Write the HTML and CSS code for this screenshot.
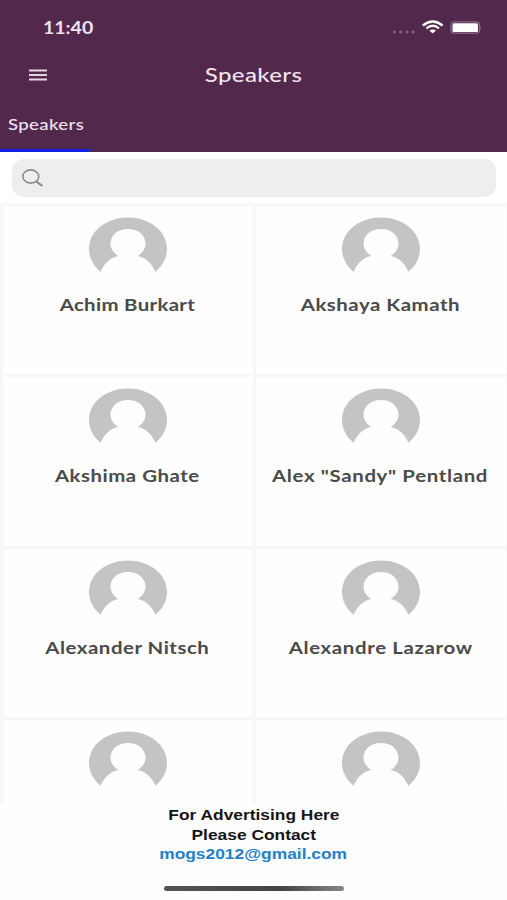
FILE: index.html
```html
<!DOCTYPE html>
<html lang="en">
<head>
<meta charset="utf-8">
<title>Speakers</title>
<link rel="stylesheet" href="styles.css">
</head>
<body>
<svg width="0" height="0" class="defs">
  <symbol id="avatar" viewBox="0 0 78 56">
    <path fill="#c4c4c4" d="M11.700 54.700C4.500 49 0 41 0 32C0 14 17.500 0.500 39 0.500S78 14 78 32C78 41 73.500 49 66.300 54.700C63.500 47.500 57.500 40.500 48.500 39C53.500 36.300 56.500 31.500 56.500 26.500C56.500 18 48.700 12 39 12S21.500 18 21.500 26.500C21.500 31.500 24.500 36.300 29.500 39C20.500 40.500 14.500 47.500 11.700 54.700Z"/>
  </symbol>
</svg>
<header class="header">
  <div class="status">
    <span class="time wide">11:40</span>
    <svg class="indicators" width="92" height="18" viewBox="0 0 92 18">
      <g fill="#7d5b7a"><circle cx="4.500" cy="14" r="1.700"/><circle cx="10.700" cy="14" r="1.700"/><circle cx="16.900" cy="14" r="1.700"/><circle cx="23" cy="14" r="1.700"/></g>
      <g fill="none" stroke="#fff" stroke-width="2.300"><path d="M32.800 7.500Q42.700-.5 52.600 7.500"/><path d="M36.400 10.300Q42.700 5.300 49 10.300"/></g>
      <path fill="#fff" d="M39.400 12.600Q42.700 10.300 46 12.600L42.700 15.600Z"/>
      <rect x="61" y="3.900" width="28.500" height="11.200" rx="3" fill="none" stroke="#8b6d89" stroke-width="1.200"/>
      <rect x="62.500" y="5.300" width="25.500" height="8.700" rx="1.500" fill="#fff"/>
      <path fill="#9a8098" d="M90.300 7.700Q92 9.600 90.300 11.400Z"/>
    </svg>
  </div>
  <div class="bar">
    <svg class="menu" width="18" height="12" viewBox="0 0 18 12"><path stroke="#e3d7e2" stroke-width="1.900" d="M0 1.500H18M0 6H18M0 10.500H18"/></svg>
    <h1 class="title wide">Speakers</h1>
  </div>
  <nav class="tabs"><a class="tab"><span class="wide">Speakers</span></a></nav>
</header>
<div class="search-wrap">
  <div class="search">
    <svg width="22" height="18" viewBox="0 0 22 18" fill="none" stroke="#8c8c8c"><ellipse cx="8.800" cy="7.500" rx="8" ry="6.600" stroke-width="1.600"/><path stroke-width="2.200" d="M14 12.100L20.300 17"/></svg>
  </div>
</div>
<main class="grid">
  <div class="card"><svg class="avatar"><use href="#avatar"/></svg><span class="name wide snug">Achim Burkart</span></div>
  <div class="card"><svg class="avatar"><use href="#avatar"/></svg><span class="name wide">Akshaya Kamath</span></div>
  <div class="card"><svg class="avatar"><use href="#avatar"/></svg><span class="name wide">Akshima Ghate</span></div>
  <div class="card"><svg class="avatar"><use href="#avatar"/></svg><span class="name wide loose">Alex "Sandy" Pentland</span></div>
  <div class="card"><svg class="avatar"><use href="#avatar"/></svg><span class="name wide">Alexander Nitsch</span></div>
  <div class="card"><svg class="avatar"><use href="#avatar"/></svg><span class="name wide loose">Alexandre Lazarow</span></div>
  <div class="card"><svg class="avatar"><use href="#avatar"/></svg></div>
  <div class="card"><svg class="avatar"><use href="#avatar"/></svg></div>
</main>
<footer class="footer">
  <p class="line">For Advertising Here</p>
  <p class="line">Please Contact</p>
  <p class="line mail">mogs2012@gmail.com</p>
  <div class="home"></div>
</footer>
</body>
</html>
```
FILE: styles.css
```css
* { box-sizing: border-box; margin: 0; }
body {
  width: 507px;
  height: 900px;
  overflow: hidden;
  display: flex;
  flex-direction: column;
  background: #fefefe;
  font-family: Lato, "Open Sans", sans-serif;
}
.defs { position: absolute; }
.wide { display: block; white-space: nowrap; transform: scaleX(1.2); }
.header {
  height: 151.500px;
  flex: none;
  display: flex;
  flex-direction: column;
  background: #52294d;
  color: #f0e2ef;
}
.status { height: 51px; display: flex; justify-content: space-between; padding: 18px 25px 0 43px; }
.time { font-size: 16.500px; line-height: 20px; font-weight: 700; transform: scaleX(1.18); transform-origin: left; }
.bar { height: 46px; display: grid; grid-template-columns: 100px 1fr 100px; align-items: center; }
.menu { margin: 1px 0 0 29px; }
.title { font-size: 20px; font-weight: 500; text-align: center; letter-spacing: .3px; }
.tabs { flex: 1; display: flex; }
.tab { width: 90px; padding: 17px 0 0 8px; border-bottom: 3px solid #1420e6; font-size: 15.500px; line-height: 20px; font-weight: 500; letter-spacing: .3px; }
.tab .wide { transform-origin: left; }
.search-wrap { flex: none; height: 51.500px; padding: 7.500px 11px 0 12px; background: #fff; }
.search { height: 38px; border-radius: 12px; background: #eee; padding: 10px 0 0 9.500px; }
.grid {
  flex: none;
  height: 602px;
  overflow: hidden;
  display: grid;
  grid-template-columns: 249.500px 250px;
  grid-auto-rows: 168.400px;
  gap: 3px;
  padding: 3px;
  background: #f7f7f7;
}
.card { display: flex; flex-direction: column; align-items: center; background: #fefefe; padding-top: 11px; }
.avatar { width: 78px; height: 56px; flex: none; }
.name { margin-top: 21px; font-size: 17px; line-height: 22px; font-weight: 700; color: #4a4a4a; letter-spacing: .43px; }
.snug { letter-spacing: .27px; }
.loose { letter-spacing: .54px; }
.footer { flex: 1; display: flex; flex-direction: column; align-items: center; font-family: "Liberation Sans", Arial, sans-serif; font-weight: 700; }
.line { font-size: 15px; line-height: 19.600px; color: #151515; transform: scaleX(1.158); }
.mail { color: #2380c8; }
.home { width: 180px; height: 5px; margin-top: 22px; border-radius: 3px; background: linear-gradient(90deg, #555, #444 65%, #888); }
```
